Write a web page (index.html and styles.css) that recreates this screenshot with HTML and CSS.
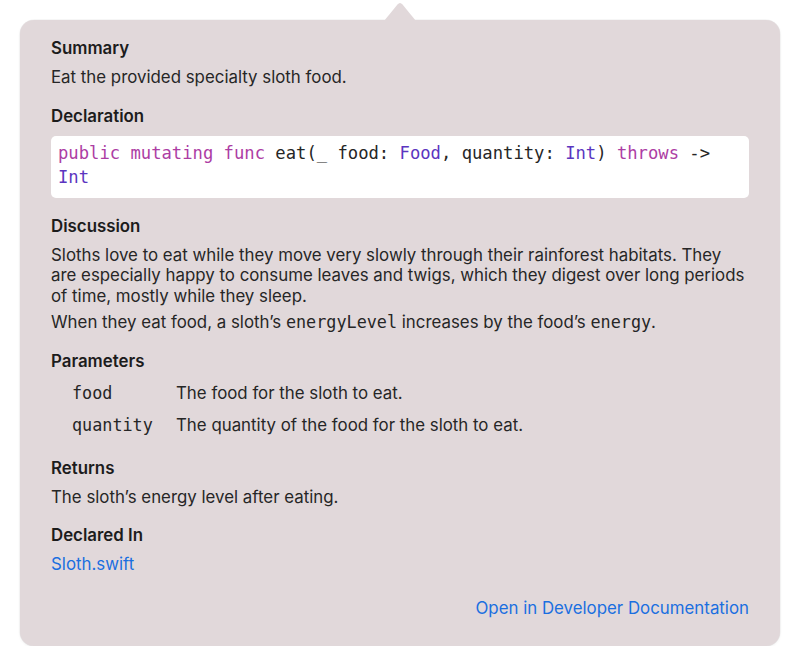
FILE: index.html
```html
<!DOCTYPE html>
<html>
<head>
<meta charset="utf-8">
<link rel="stylesheet" href="styles.css">
</head>
<body>
<div class="stage">
  <div class="popover">
    <svg class="arrow" width="40" height="20" viewBox="0 0 40 20"><path d="M4 20 L17.5 3.5 Q20 0.5 22.5 3.5 L36 20 Z" fill="#e1d8da"/></svg>
    <section class="sec">
      <h3>Summary</h3>
      <p>Eat the provided specialty sloth food.</p>
    </section>
    <section class="sec">
      <h3>Declaration</h3>
      <div class="code"><span class="kw">public</span> <span class="kw">mutating</span> <span class="kw">func</span> eat(_ food: <span class="ty">Food</span>, quantity: <span class="ty">Int</span>) <span class="kw">throws</span> -&gt; <span class="ty">Int</span></div>
    </section>
    <section class="sec">
      <h3>Discussion</h3>
      <p>Sloths love to eat while they move very slowly through their rainforest habitats. They are especially happy to consume leaves and twigs, which they digest over long periods of time, mostly while they sleep.</p>
      <p class="p2">When they eat food, a sloth’s <code>energyLevel</code> increases by the food’s <code>energy</code>.</p>
    </section>
    <section class="sec">
      <h3>Parameters</h3>
      <div class="params">
        <div class="param"><code class="pname">food</code><span>The food for the sloth to eat.</span></div>
        <div class="param"><code class="pname">quantity</code><span>The quantity of the food for the sloth to eat.</span></div>
      </div>
    </section>
    <section class="sec sec-lg">
      <h3>Returns</h3>
      <p>The sloth’s energy level after eating.</p>
    </section>
    <section class="sec">
      <h3>Declared In</h3>
      <p><a class="link" href="#">Sloth.swift</a></p>
    </section>
    <div class="footer"><a class="link" href="#">Open in Developer Documentation</a></div>
  </div>
</div>
</body>
</html>
```

FILE: styles.css
```css
html, body {
  margin: 0;
  padding: 0;
  background: #ffffff;
}
body {
  font-family: "Inter", "Noto Sans", sans-serif;
  font-size: 16.85px;
  color: #262626;
}
.stage {
  padding: 20px 20px 0 20px;
}
.popover {
  position: relative;
  background: #e1d8da;
  border-radius: 14px;
  padding: 18px 31px 28px 31px;
  box-shadow: 0 0 0 0.5px rgba(0,0,0,0.06), 0 1px 3px rgba(0,0,0,0.06);
}
.arrow {
  position: absolute;
  top: -19px;
  left: 360px;
}
.sec {
  margin-bottom: 18px;
}
.sec-lg {
  margin-top: 23px;
}
h3 {
  margin: 0 0 9px 0;
  font-size: 16.85px;
  font-weight: 600;
  line-height: 20px;
  color: #1c1c1c;
}
p {
  margin: 0;
  line-height: 20.5px;
}
.p2 {
  margin-top: 6px;
}
code {
  font-family: "DejaVu Sans Mono", "Liberation Mono", monospace;
  font-size: 16.8px;
}
.code {
  background: #ffffff;
  border-radius: 5px;
  padding: 5px 7px 9px 7px;
  font-family: "DejaVu Sans Mono", "Liberation Mono", monospace;
  font-size: 17.2px;
  line-height: 24px;
  color: #262626;
  margin-top: 10px;
}
.kw { color: #ad3da4; }
.ty { color: #5b35c0; }
.params {
  padding-left: 21px;
  margin-top: 12px;
  display: flex;
  flex-direction: column;
  gap: 12px;
}
.param {
  display: flex;
  line-height: 20px;
}
.pname {
  width: 104px;
  flex: none;
  color: #262626;
}
.link {
  color: #1a6fe0;
  text-decoration: none;
}
.footer {
  display: flex;
  justify-content: flex-end;
  margin-top: 23px;
}
```
